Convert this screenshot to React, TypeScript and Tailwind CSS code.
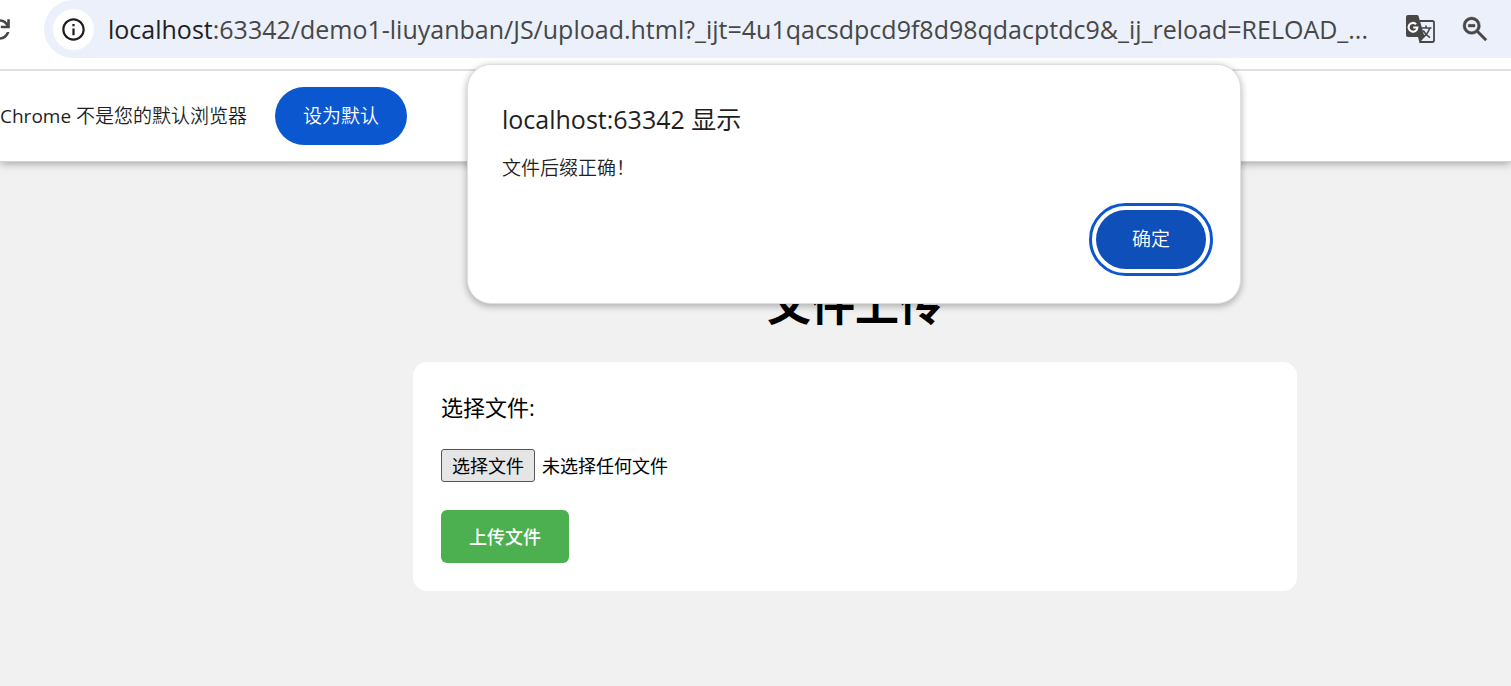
import { useRef, useState } from 'react'
import { MdOutlineInfo } from 'react-icons/md'

const URL_REST =
  ':63342/demo1-liuyanban/JS/upload.html?_ijt=4u1qacsdpcd9f8d98qdacptdc9&_ij_reload=RELOAD_...'

function ReloadIcon() {
  return (
    <svg width="31" height="31" viewBox="0 -960 960 960" fill="currentColor" aria-hidden="true">
      <path d="M480-160q-134 0-227-93t-93-227q0-134 93-227t227-93q69 0 132 28.5T720-690v-110h80v280H520v-80h168q-32-56-87.5-88T480-720q-100 0-170 70t-70 170q0 100 70 170t170 70q77 0 139-44t87-116h84q-28 106-114 173t-196 67Z" />
    </svg>
  )
}

function ZoomOutIcon() {
  return (
    <svg
      width="32"
      height="32"
      viewBox="0 -960 960 960"
      fill="currentColor"
      stroke="currentColor"
      strokeWidth="12"
      aria-hidden="true"
    >
      <path d="M784-120 532-372q-30 24-69 38t-83 14q-109 0-184.5-75.5T120-580q0-109 75.5-184.5T380-840q109 0 184.5 75.5T640-580q0 44-14 83t-38 69l252 252-56 56ZM380-400q75 0 127.5-52.5T560-580q0-75-52.5-127.5T380-760q-75 0-127.5 52.5T200-580q0 75 52.5 127.5T380-400ZM280-540v-80h200v80H280Z" />
    </svg>
  )
}

function TranslateIcon() {
  return (
    <svg width="29" height="28" viewBox="0 0 29 28" fill="none" stroke="currentColor" aria-hidden="true">
      <path d="M13 6h13.3q1.7 0 1.7 1.7v17.6q0 1.7-1.7 1.7H13.5" strokeWidth="1.8" />
      <path d="M15 13h10.5M20 10.5V13M23.6 13.2q-1.6 6-7.6 9.6M17.2 15.4q2 4.2 6.8 7.2" strokeWidth="1.6" />
      <path d="M2 0h9q1.2 0 1.5 1.1L18.6 22l-5 5.8L12 22H2q-2 0-2-2V2q0-2 2-2Z" fill="currentColor" stroke="none" />
      <path d="M10.1 9.2A4.4 4.4 0 1 0 11.4 12.5H7.2" stroke="#fff" strokeWidth="2.1" />
    </svg>
  )
}

function Toolbar() {
  return (
    <header className="relative z-10 flex h-[71px] items-start overflow-hidden border-b-2 border-[#e0e0e0] bg-white">
      <button type="button" aria-label="重新加载" className="-ml-4 mt-[14px] mr-[29px] shrink-0 text-[#474747]">
        <ReloadIcon />
      </button>
      <div className="flex h-[58px] min-w-0 flex-1 items-center rounded-l-full bg-[#ebf0fa] pl-[9px] pr-5">
        <button
          type="button"
          aria-label="查看网站信息"
          className="flex size-[41px] shrink-0 items-center justify-center rounded-full bg-white text-[#1f1f1f]"
        >
          <MdOutlineInfo size={27} />
        </button>
        <div className="ml-[14px] flex min-w-0 flex-1 items-center text-[25px] leading-8">
          <label htmlFor="address" className="text-[#1f1f1f]">localhost</label>
          <input
            id="address"
            type="text"
            defaultValue={URL_REST}
            className="min-w-0 flex-1 bg-transparent text-[#474747] outline-none"
          />
        </div>
        <button type="button" aria-label="翻译此网页" className="ml-4 shrink-0 text-[#474747]">
          <TranslateIcon />
        </button>
        <button type="button" aria-label="缩放" className="ml-6 shrink-0 text-[#474747]">
          <ZoomOutIcon />
        </button>
      </div>
    </header>
  )
}

function DefaultBrowserBar() {
  return (
    <div className="relative flex h-[91px] items-center gap-7 border-b border-[#d0d2d2] bg-white text-[19px] leading-6 font-[350] text-[#1f1f1f] shadow-[0_2px_8px_rgba(0,0,0,0.3)]">
      <p>
        <span className="font-normal">Chrome</span> 不是您的默认浏览器
      </p>
      <button type="button" className="h-[58px] rounded-full bg-[#0b57d0] px-7 text-white">
        设为默认
      </button>
    </div>
  )
}

function AlertDialog({ onClose }: { onClose: () => void }) {
  return (
    <div className="absolute inset-x-0 top-16 z-20 flex justify-center pl-[197px]">
      <section
        role="alertdialog"
        aria-labelledby="alert-title"
        aria-describedby="alert-message"
        className="flex w-[774px] flex-col rounded-3xl border border-[#dcdfdf] bg-white px-[34px] pt-[38px] pb-[34px] text-[#1f1f1f] shadow-[0_2px_6px_1px_rgba(0,0,0,0.25)]"
      >
        <h2 id="alert-title" className="text-[25px] leading-8">localhost:63342 显示</h2>
        <p id="alert-message" className="mt-[21px] text-[19px] leading-6 font-[350]">文件后缀正确！</p>
        <button
          type="button"
          onClick={onClose}
          className="mt-[30px] h-[59px] w-[110px] self-end rounded-full bg-[#0e4fb9] text-[19px] font-[350] text-white ring-4 ring-white outline-3 outline-offset-4 outline-[#0b57d0]"
        >
          确定
        </button>
      </section>
    </div>
  )
}

function UploadForm() {
  const fileRef = useRef<HTMLInputElement>(null)
  const [fileName, setFileName] = useState('未选择任何文件')

  return (
    <form
      onSubmit={e => e.preventDefault()}
      className="w-full max-w-[884px] rounded-[14px] bg-white p-7 text-lg leading-6"
    >
      <label htmlFor="file" className="block text-[22px] leading-[34px]">选择文件:</label>
      <div className="mt-[25px] flex items-center gap-[7px]">
        <input
          ref={fileRef}
          id="file"
          type="file"
          className="hidden"
          onChange={e => setFileName(e.target.files?.[0]?.name ?? '未选择任何文件')}
        />
        <button
          type="button"
          onClick={() => fileRef.current?.click()}
          className="h-[33px] rounded-[3px] border border-[#555] bg-[#e5e5e5] px-[10px]"
        >
          选择文件
        </button>
        <span>{fileName}</span>
      </div>
      <button type="submit" className="mt-7 h-[53px] rounded-md bg-[#4caf50] px-7 font-medium text-white">
        上传文件
      </button>
    </form>
  )
}

export default function App() {
  const [alertOpen, setAlertOpen] = useState(true)

  return (
    <div className="relative flex min-h-screen flex-col overflow-hidden bg-[#f1f1f1] font-['Open_Sans','Noto_Sans_CJK_SC',sans-serif] text-black">
      <Toolbar />
      <DefaultBrowserBar />
      <main className="flex flex-1 flex-col items-center pt-28 pl-[199px]">
        <h1 className="mb-7 text-[44px] leading-[60px] font-bold">文件上传</h1>
        <UploadForm />
      </main>
      {alertOpen && <AlertDialog onClose={() => setAlertOpen(false)} />}
    </div>
  )
}
